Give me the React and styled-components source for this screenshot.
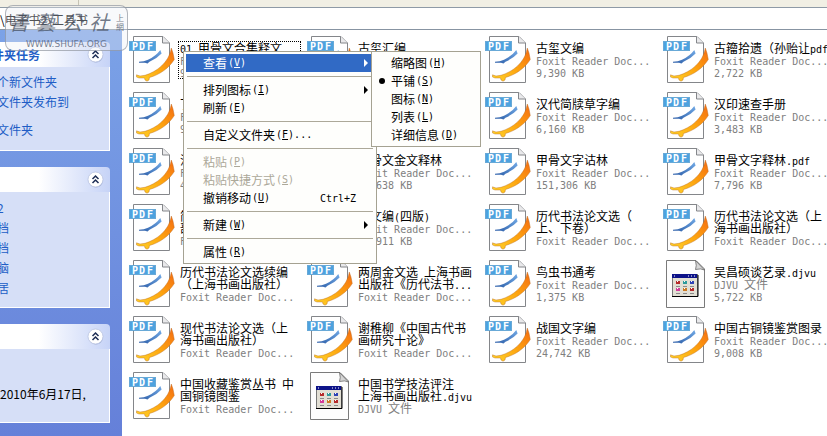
import React from 'react';
import styled, { createGlobalStyle, css } from 'styled-components';

const GlobalStyle = createGlobalStyle`
  * { box-sizing: border-box; }
  body {
    margin: 0;
    font-family: "Noto Sans CJK SC", sans-serif;
    font-size: 12px;
    line-height: 12px;
    color: #000;
    background: #fff;
  }
  ul { margin: 0; padding: 0; list-style: none; }
  button { font: inherit; color: inherit; background: none; border: 0; padding: 0; }
`;

const Page = styled.div`
  position: relative;
  display: flex;
  flex-direction: column;
  min-height: 100vh;
  overflow: hidden;
`;

const ToolbarEdge = styled.div`
  display: flex;
  height: 8px;
  background: #f1efe4;
  border-bottom: 1px solid #8e9aa6;
`;

const ToolbarGrip = styled.div`
  width: 79px;
  height: 5px;
  border-right: 1px solid #c6c3b4;
`;

const AddressInput = styled.input`
  width: 100%;
  height: 22px;
  padding: 2px 0 0;
  border: 0;
  border-bottom: 1px solid #8794a2;
  outline: 0;
  font: inherit;
  line-height: 18px;
  color: #000;
  background: #fff;
`;

const Main = styled.div`
  display: flex;
  flex: 1;
`;

const Sidebar = styled.aside`
  display: flex;
  flex-direction: column;
  gap: 16px;
  flex: 0 0 122px;
  padding: 12px 12px 12px 0;
  background: linear-gradient(#7ba2e7, #6580d9);
`;

const Panel = styled.section`
  overflow: hidden;
  border-top-right-radius: 4px;
`;

const PanelHeader = styled.header`
  display: flex;
  align-items: center;
  justify-content: space-between;
  height: 25px;
  padding-right: 6px;
  background: linear-gradient(to right, #fff 35%, #c6d3f7);
`;

const PanelTitle = styled.h2`
  margin: 0 0 0 -8px;
  font-size: 12px;
  line-height: 16px;
  font-weight: 700;
  white-space: nowrap;
  color: #215dc6;
`;

const CollapseButton = styled.button`
  display: block;
  width: 17px;
  height: 17px;
  margin-left: auto;
  svg { display: block; }
`;

const PanelBody = styled.div`
  height: ${(p) => p.$height}px;
  padding-top: ${(p) => p.$top}px;
  background: #d6dff7;
  border: solid #fff;
  border-width: 0 1px 1px 0;
`;

const LinkList = styled.ul`
  display: flex;
  flex-direction: column;
  && { margin-left: -3px; }
`;

const LinkItem = styled.li`
  height: 20px;
  margin-bottom: ${(p) => (p.$spaced ? 8 : 0)}px;
  a {
    color: #215dc6;
    text-decoration: none;
    line-height: 20px;
    white-space: nowrap;
  }
`;

const Detail = styled.p`
  margin: 0;
  line-height: 20px;
  white-space: nowrap;
`;

const Files = styled.ul`
  flex: 1;
  min-width: 0;
  overflow: hidden;
  display: grid;
  grid-template-columns: repeat(4, 178px);
  grid-auto-rows: 56px;
  align-content: start;
  && { padding: 6px 0 0 7px; }
`;

const Tile = styled.li`
  display: flex;
  align-items: flex-start;
  svg { display: block; flex: none; }
`;

const TileText = styled.div`
  display: flex;
  flex-direction: column;
  justify-content: center;
  height: 48px;
  margin-left: 3px;
  white-space: nowrap;
`;

const Caption = styled.div`
  padding: 0 1px;
  ${(p) => p.$focused && css`
    width: 121px;
    outline: 1px dotted #000;
  `}
`;

const Line = styled.div`
  height: 12px;
  color: ${(p) => (p.$muted ? '#808080' : '#000')};
`;

const Latin = styled.span`
  font-family: "DejaVu Sans Mono", monospace;
  font-size: 10px;
  white-space: pre;
`;

const MenuBox = styled.div`
  position: absolute;
  left: ${(p) => p.$left}px;
  top: ${(p) => p.$top}px;
  z-index: 2;
  width: ${(p) => p.$width}px;
  padding: 2px;
  background: #fefefc;
  border: 1px solid #a5a292;
`;

const MenuItem = styled.button`
  display: flex;
  align-items: center;
  width: ${(p) => (p.$wide ? '186px' : '100%')};
  height: 18px;
  padding: 0 4px 0 17px;
  text-align: left;
  white-space: nowrap;
  color: ${(p) => (p.$active ? '#fff' : p.disabled ? '#aca899' : '#000')};
  background: ${(p) => (p.$active ? '#316ac5' : 'transparent')};
  u { text-underline-offset: 1px; }
`;

const MenuLabel = styled.span`
  display: flex;
  gap: 1px;
  flex: 1;
`;

const Shortcut = styled.span`
  margin-right: 12px;
`;

const Bullet = styled.span`
  width: 6px;
  height: 6px;
  margin: 0 6px 0 -12px;
  border-radius: 50%;
  background: #000;
`;

const Separator = styled.hr`
  height: 1px;
  margin: 4px 1px;
  border: 0;
  background: #aca899;
`;

const Watermark = styled.div`
  position: absolute;
  left: 5px;
  top: 5px;
  z-index: 3;
  width: 123px;
  height: 46px;
  border: 1px solid rgba(130, 135, 145, 0.6);
  border-radius: 8px;
  background: rgba(235, 238, 244, 0.35);
  color: rgba(70, 80, 98, 0.75);
  pointer-events: none;
`;

const WatermarkName = styled.div`
  display: flex;
  align-items: center;
  justify-content: space-between;
  height: 32px;
  padding: 0 3px;
  font-family: "Noto Sans CJK TC", sans-serif;
  font-size: 20px;
  font-style: italic;
  font-weight: 400;
  line-height: 30px;
`;

const Seal = styled.span`
  width: 8px;
  font-size: 8px;
  line-height: 9px;
  font-style: normal;
`;

const WatermarkUrl = styled.div`
  text-align: center;
  font-family: "DejaVu Sans", sans-serif;
  font-size: 9px;
  line-height: 12px;
  color: rgba(95, 105, 125, 0.85);
`;

function Mixed({ text }) {
  return text.split(/([\x20-\x7e]+)/).map((part, i) =>
    i % 2 ? <Latin key={i}>{part}</Latin> : part
  );
}

function PdfIcon() {
  return (
    <svg width="47" height="48" viewBox="0 0 47 48" aria-hidden="true">
      <defs>
        <linearGradient id="orange" x1="0" y1="1" x2="1" y2="0">
          <stop offset="0" stopColor="#ffd42a" />
          <stop offset="0.5" stopColor="#fda40f" />
          <stop offset="1" stopColor="#f46a12" />
        </linearGradient>
        <linearGradient id="blue" x1="0" y1="1" x2="1" y2="0">
          <stop offset="0" stopColor="#2d5ea8" />
          <stop offset="1" stopColor="#72aae6" />
        </linearGradient>
      </defs>
      <path d="M4.500.5H34L40.500 7V46.500H4.500Z" fill="#fff" stroke="#84868a" />
      <path d="M33.500.5V7H40.500" fill="#e9e9eb" stroke="#84868a" />
      <path d="M10 25.800Q15 25.600 19 23.800Q27 20 31.300 14L32.600 17.500Q28 22.500 20.500 25.800L18.500 27.600L16 26.800H10Z" fill="url(#blue)" />
      <path d="M7.500 38.800L11 40L16 39.300C27 36 40 27 42.300 12L44 17L45.300 23.500C40 32 31 38.500 20.500 41.500L20 44L18 45.200L16 44L15.500 42H10L7.500 41Z" fill="url(#orange)" stroke="#b5661c" strokeWidth=".4" />
      <rect x=".5" y="5.500" width="26" height="9" fill="#4da2df" stroke="#68a9d7" />
      <text y="14" fill="#fff" fontFamily="DejaVu Sans Mono, monospace" fontWeight="700" fontSize="10">
        <tspan x="3">P</tspan><tspan x="10">D</tspan><tspan x="18">F</tspan>
      </text>
    </svg>
  );
}

function AppIcon() {
  const dots = ['#b52b2b', '#2d9b9b', '#2e43b5', '#d43c9a', '#cc7a23', '#b52b2b'];
  return (
    <svg width="47" height="48" viewBox="0 0 47 48" aria-hidden="true">
      <path d="M3.500.5H33L41.500 9V47.500H3.500Z" fill="#fdfdfd" stroke="#7a7a7a" />
      <path d="M32.500.5Q34 6 32.500 9.500Q38 8 41.500 10Z" fill="#d6d6d6" stroke="#666" strokeWidth=".8" />
      <rect x="9.500" y="14.500" width="25" height="22" fill="#e2dfd4" stroke="#777" />
      <path d="M35 15V36.500H9" fill="none" stroke="#000" />
      <rect x="9" y="14" width="25" height="4" fill="#0c1288" />
      <path d="M11 16h1M25 16h1M28 16h1M31 16h1" stroke="#fff" />
      {dots.map((c, i) => (
        <g key={c + i} transform={`translate(${13 + (i % 3) * 7} ${21 + Math.floor(i / 3) * 7})`}>
          <rect width="4" height="3" fill={c} />
          <path d="M0 5.500H4" stroke="#8a8a8a" fill="none" />
          <rect x="1" width="1" height="1" fill="#fff" />
        </g>
      ))}
    </svg>
  );
}

function Arrow() {
  return (
    <svg width="4" height="8" viewBox="0 0 4 8" aria-hidden="true">
      <path d="M0 0L4 4L0 8Z" fill="currentColor" />
    </svg>
  );
}

function Collapse() {
  return (
    <CollapseButton type="button" aria-label="折叠">
      <svg width="17" height="17" viewBox="0 0 17 17">
        <circle cx="9" cy="9.500" r="7" fill="#8fa0cc" opacity=".7" />
        <circle cx="8.500" cy="8.500" r="7.500" fill="#fff" stroke="#b9c3df" strokeWidth=".8" />
        <path d="M5.500 8L8.500 5L11.500 8M5.500 12L8.500 9L11.500 12" fill="none" stroke="#1d2d55" strokeWidth="1.500" />
      </svg>
    </CollapseButton>
  );
}

function SidePanel({ title, height, top, children }) {
  return (
    <Panel>
      <PanelHeader>
        {title && <PanelTitle>{title}</PanelTitle>}
        <Collapse />
      </PanelHeader>
      <PanelBody $height={height} $top={top}>{children}</PanelBody>
    </Panel>
  );
}

const FOXIT = 'Foxit Reader Doc...';
const DJVU = 'DJVU 文件';

const files = [
  { name: ['01 甲骨文合集释文'], info: [FOXIT, '9,214 KB'], focused: true },
  { name: ['古玺汇编'], info: [FOXIT, '8,120 KB'] },
  { name: ['古玺文编'], info: [FOXIT, '9,390 KB'] },
  { name: ['古籀拾遗（孙贻让pdf'], info: [FOXIT, '2,722 KB'] },
  { name: ['丁佛言古籀补'], info: [FOXIT, '9,105 KB'] },
  { name: ['汉代印谱'], info: [FOXIT, '5,310 KB'] },
  { name: ['汉代简牍草字编'], info: [FOXIT, '6,160 KB'] },
  { name: ['汉印速查手册'], info: [FOXIT, '3,483 KB'] },
  { name: ['汉印文字征'], info: [FOXIT, '4,260 KB'] },
  { name: ['甲骨文金文释林'], info: [FOXIT, '12,638 KB'] },
  { name: ['甲骨文字诂林'], info: [FOXIT, '151,306 KB'] },
  { name: ['甲骨文字释林.pdf'], info: [FOXIT, '7,796 KB'] },
  { name: ['简帛文字', '部首'], info: [FOXIT] },
  { name: ['金文编(四版)'], info: [FOXIT, '28,911 KB'] },
  { name: ['历代书法论文选（', '上、下卷）'], info: [FOXIT] },
  { name: ['历代书法论文选（上', '海书画出版社）'], info: [FOXIT] },
  { name: ['历代书法论文选续编', '（上海书画出版社）'], info: [FOXIT] },
  { name: ['两周金文选 上海书画', '出版社《历代法书...'], info: [FOXIT] },
  { name: ['鸟虫书通考'], info: [FOXIT, '1,375 KB'] },
  { name: ['吴昌硕谈艺录.djvu'], info: [DJVU, '5,722 KB'], app: true },
  { name: ['现代书法论文选（上', '海书画出版社）'], info: [FOXIT] },
  { name: ['谢稚柳《中国古代书', '画研究十论》'], info: [FOXIT] },
  { name: ['战国文字编'], info: [FOXIT, '24,742 KB'] },
  { name: ['中国古铜镜鉴赏图录'], info: [FOXIT, '9,008 KB'] },
  { name: ['中国收藏鉴赏丛书 中', '国铜镜图鉴'], info: [FOXIT] },
  { name: ['中国书学技法评注', '上海书画出版社.djvu'], info: [DJVU], app: true },
];

function FileTile({ file }) {
  return (
    <Tile>
      {file.app ? <AppIcon /> : <PdfIcon />}
      <TileText>
        <Caption $focused={file.focused}>
          {file.name.map((t) => <Line key={t}><Mixed text={t} /></Line>)}
          {file.info.map((t) => <Line key={t} $muted><Mixed text={t} /></Line>)}
        </Caption>
      </TileText>
    </Tile>
  );
}

const mainMenu = [
  { label: '查看', mnemonic: 'V', arrow: true, active: true },
  null,
  { label: '排列图标', mnemonic: 'I', arrow: true },
  { label: '刷新', mnemonic: 'E' },
  null,
  { label: '自定义文件夹', mnemonic: 'F', tail: '...' },
  null,
  { label: '粘贴', mnemonic: 'P', disabled: true },
  { label: '粘贴快捷方式', mnemonic: 'S', disabled: true },
  { label: '撤销移动', mnemonic: 'U', shortcut: 'Ctrl+Z' },
  null,
  { label: '新建', mnemonic: 'W', arrow: true },
  null,
  { label: '属性', mnemonic: 'R' },
];

const viewMenu = [
  { label: '缩略图', mnemonic: 'H' },
  { label: '平铺', mnemonic: 'S', checked: true },
  { label: '图标', mnemonic: 'N' },
  { label: '列表', mnemonic: 'L' },
  { label: '详细信息', mnemonic: 'D' },
];

function Menu({ items, wide, children, ...box }) {
  return (
    <MenuBox role="menu" {...box}>
      {items.map((it, i) =>
        it ? (
          <MenuItem key={i} type="button" role="menuitem" disabled={it.disabled} $active={it.active} $wide={wide}>
            {it.checked && <Bullet />}
            <MenuLabel>
              {it.label}
              <Latin>(<u>{it.mnemonic}</u>){it.tail}</Latin>
            </MenuLabel>
            {it.shortcut && <Shortcut><Latin>{it.shortcut}</Latin></Shortcut>}
            {it.arrow && <Arrow />}
          </MenuItem>
        ) : (
          <Separator key={i} />
        )
      )}
      {children}
    </MenuBox>
  );
}

export default function App() {
  return (
    <Page>
      <GlobalStyle />
      <ToolbarEdge><ToolbarGrip /></ToolbarEdge>
      <AddressInput aria-label="地址" defaultValue="\电子书2\工具书" />
      <Main>
        <Sidebar>
          <SidePanel title="件夹任务" height={84} top={5}>
            <LinkList>
              <LinkItem><a href="#new">个新文件夹</a></LinkItem>
              <LinkItem $spaced><a href="#publish">文件夹发布到</a></LinkItem>
              <LinkItem><a href="#share">文件夹</a></LinkItem>
            </LinkList>
          </SidePanel>
          <SidePanel height={116} top={6}>
            <LinkList>
              <LinkItem><a href="#books">2</a></LinkItem>
              <LinkItem><a href="#documents">档</a></LinkItem>
              <LinkItem><a href="#shared">档</a></LinkItem>
              <LinkItem><a href="#computer">脑</a></LinkItem>
              <LinkItem><a href="#network">居</a></LinkItem>
            </LinkList>
          </SidePanel>
          <SidePanel height={74} top={35}>
            <Detail>2010年6月17日,</Detail>
          </SidePanel>
        </Sidebar>
        <Files>
          {files.map((f, i) => <FileTile key={i} file={f} />)}
        </Files>
      </Main>
      <Menu items={mainMenu} wide $left={183} $top={51} $width={194}>
        <Menu items={viewMenu} $left={187} $top={-1} $width={110} />
      </Menu>
      <Watermark>
        <WatermarkName>
          <span>書</span><span>藝</span><span>公</span><span>社</span>
          <Seal>上網</Seal>
        </WatermarkName>
        <WatermarkUrl>WWW.SHUFA.ORG</WatermarkUrl>
      </Watermark>
    </Page>
  );
}
